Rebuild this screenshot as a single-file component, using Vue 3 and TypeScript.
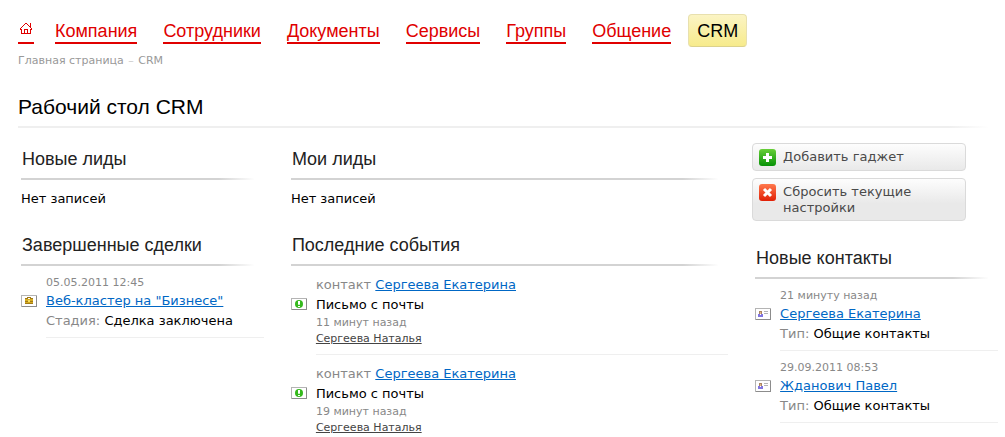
<script setup lang="ts">
interface Deal {
  date: string
  title: string
  stage: string
}

interface CrmEvent {
  contact: string
  subject: string
  ago: string
  author: string
}

interface Contact {
  date: string
  name: string
  type: string
}

const menu: string[] = ['Компания', 'Сотрудники', 'Документы', 'Сервисы', 'Группы', 'Общение']

const deals: Deal[] = [
  { date: '05.05.2011 12:45', title: 'Веб-кластер на "Бизнесе"', stage: 'Сделка заключена' },
]

const events: CrmEvent[] = [
  { contact: 'Сергеева Екатерина', subject: 'Письмо с почты', ago: '11 минут назад', author: 'Сергеева Наталья' },
  { contact: 'Сергеева Екатерина', subject: 'Письмо с почты', ago: '19 минут назад', author: 'Сергеева Наталья' },
]

const contacts: Contact[] = [
  { date: '21 минуту назад', name: 'Сергеева Екатерина', type: 'Общие контакты' },
  { date: '29.09.2011 08:53', name: 'Жданович Павел', type: 'Общие контакты' },
]
</script>

<template>
  <div class="page">
    <header>
      <nav class="menu">
        <a class="menu-link home" href="#" aria-label="Главная страница">
          <svg width="16" height="14" viewBox="0 0 16 14" fill="#e00000" shape-rendering="crispEdges" aria-hidden="true">
            <path d="M7 1h2v1h1v1h1v1h1v1h1v1h1v2h-1v4h-10v-4h-1v-2h1v-1h1v-1h1v-1h1v-1h1z M12 1h1v4h-1z" />
            <path fill="#fff" d="M7 2h2v1h1v1h1v1h1v1h1v1h-1v4h-2v-4h-4v4h-2v-4h-1v-1h1v-1h1v-1h1v-1h1z M7 8h2v3h-2z" />
          </svg>
        </a>
        <a v-for="item in menu" :key="item" class="menu-link" href="#">{{ item }}</a>
        <a class="menu-current" href="#" aria-current="page">CRM</a>
      </nav>
      <div class="crumbs"><a href="#">Главная страница</a> <i>–</i> <a href="#">CRM</a></div>
      <h1>Рабочий стол CRM</h1>
    </header>

    <main class="board">
      <div class="column">
        <section class="gadget">
          <h2>Новые лиды</h2>
          <p class="empty">Нет записей</p>
        </section>
        <section class="gadget">
          <h2>Завершенные сделки</h2>
          <ul>
            <li v-for="deal in deals" :key="deal.title">
              <svg class="icon" width="16" height="12" viewBox="0 0 16 12" shape-rendering="crispEdges" aria-hidden="true">
                <path fill="#b4b4b4" d="M0 0h16v12h-16z" />
                <path fill="#8c8c8c" d="M15 1h1v11h-15v-1h14z" />
                <path fill="#fff" d="M1 1h14v10h-14z" />
                <path fill="#a17a18" d="M6 2h4v1h2v6h-8v-6h2z" />
                <path fill="#fff" d="M7 3h2v1h-2z" />
                <path fill="#d6ac20" d="M4 4h8v2h-8z M4 7h8v1h-8z" />
                <path fill="#f5df62" d="M7 5h2v2h-2z" />
              </svg>
              <div class="body">
                <div class="date">{{ deal.date }}</div>
                <div class="line"><a class="link" href="#">{{ deal.title }}</a></div>
                <div class="line tall"><span class="label">Стадия:</span> {{ deal.stage }}</div>
              </div>
            </li>
          </ul>
        </section>
      </div>

      <div class="column">
        <section class="gadget">
          <h2>Мои лиды</h2>
          <p class="empty">Нет записей</p>
        </section>
        <section class="gadget">
          <h2>Последние события</h2>
          <ul>
            <li v-for="event in events" :key="event.ago">
              <svg class="icon low" width="16" height="12" viewBox="0 0 16 12" aria-hidden="true">
                <g shape-rendering="crispEdges">
                  <path fill="#b4b4b4" d="M0 0h16v12h-16z" />
                  <path fill="#8c8c8c" d="M15 1h1v11h-15v-1h14z" />
                  <path fill="#fff" d="M1 1h14v10h-14z" />
                </g>
                <circle cx="8" cy="6" r="4" fill="#35b91d" />
                <path fill="#fff" d="M7 3h2v3l-.5 1h-1l-.5-1z M7 8h2v1h-2z" />
              </svg>
              <div class="body roomy">
                <div class="line tall"><span class="label">контакт</span> <a class="link" href="#">{{ event.contact }}</a></div>
                <div class="line">{{ event.subject }}</div>
                <div class="small">{{ event.ago }}</div>
                <div class="small"><a class="author" href="#">{{ event.author }}</a></div>
              </div>
            </li>
          </ul>
        </section>
      </div>

      <div class="column">
        <div class="actions">
          <button type="button">
            <svg width="17" height="17" viewBox="0 0 17 17" aria-hidden="true">
              <defs>
                <linearGradient id="green" x2="0" y2="1">
                  <stop stop-color="#68cf38" />
                  <stop offset="1" stop-color="#079207" />
                </linearGradient>
              </defs>
              <rect width="17" height="17" rx="3" fill="url(#green)" />
              <path fill="#fff" d="M7 4h3v3h3v3h-3v3h-3v-3h-3v-3h3z" />
            </svg>
            <span>Добавить гаджет</span>
          </button>
          <button type="button">
            <svg width="17" height="17" viewBox="0 0 17 17" aria-hidden="true">
              <defs>
                <linearGradient id="red" x2="0" y2="1">
                  <stop stop-color="#ff784c" />
                  <stop offset="1" stop-color="#e12006" />
                </linearGradient>
              </defs>
              <rect width="17" height="17" rx="3" fill="url(#red)" />
              <path stroke="#fff" stroke-width="3" d="M5 5l7 7M12 5l-7 7" />
            </svg>
            <span>Сбросить текущие настройки</span>
          </button>
        </div>
        <section class="gadget first">
          <h2>Новые контакты</h2>
          <ul>
            <li v-for="contact in contacts" :key="contact.name">
              <svg class="icon" width="16" height="12" viewBox="0 0 16 12" shape-rendering="crispEdges" aria-hidden="true">
                <path fill="#b4b4b4" d="M0 0h16v12h-16z" />
                <path fill="#8c8c8c" d="M15 1h1v11h-15v-1h14z" />
                <path fill="#fff" d="M1 1h14v10h-14z" />
                <path fill="#a98562" d="M4 3h3v3h-3z" />
                <path fill="#e2b58b" d="M5 4h1v2h-1z" />
                <path fill="#8175e0" d="M3 6h2v1h1v-1h2v3h-5z" />
                <path fill="#b5b5b5" d="M9 3h4v1h-4z M9 5h4v1h-4z" />
              </svg>
              <div class="body">
                <div class="date">{{ contact.date }}</div>
                <div class="line"><a class="link" href="#">{{ contact.name }}</a></div>
                <div class="line tall"><span class="label">Тип:</span> {{ contact.type }}</div>
              </div>
            </li>
          </ul>
        </section>
      </div>
    </main>
  </div>
</template>

<style>
body {
  margin: 0;
  background: #fff;
}
</style>

<style scoped>
.page {
  padding: 14px 7px 0 18px;
  font: 13px/18px Verdana, "DejaVu Sans", sans-serif;
  color: #000;
}

.menu {
  display: flex;
  align-items: flex-start;
  gap: 26px;
  font: 18px/22px Arial, "Liberation Sans", sans-serif;
}

.menu-link {
  margin-top: 6px;
  border-bottom: 2px solid #e00000;
  color: #e00000;
  text-decoration: none;
}

.home {
  display: block;
  height: 22px;
  margin-right: -5px;
}

.home svg {
  display: block;
  margin-top: 2px;
}

.menu-current {
  box-sizing: border-box;
  height: 33px;
  margin-left: -9px;
  padding: 5px 8px;
  border: 1px solid #e8e0ae;
  border-bottom-color: #dcd28c;
  border-radius: 4px;
  background: linear-gradient(#fbf4c4, #f7eb8c);
  color: #000;
  text-decoration: none;
}

.crumbs {
  margin-top: 6px;
  font-size: 11px;
  line-height: 16px;
  color: #ccc;
}

.crumbs a {
  color: #999;
  text-decoration: none;
}

.crumbs i {
  margin: 0 1px;
  font-style: normal;
}

h1 {
  margin: 26px 10px 0 0;
  padding-bottom: 7px;
  border-bottom: 2px solid;
  border-image: linear-gradient(90deg, #efefef calc(100% - 40px), #fff) 1;
  font: 21px/24px Arial, "Liberation Sans", sans-serif;
}

.board {
  display: grid;
  grid-template-columns: 5fr 9fr 5fr;
  gap: 27px;
  padding: 15px 0 0 3px;
}

.column {
  min-width: 0;
}

.gadget + .gadget {
  margin-top: 21px;
}

h2 {
  margin: 0 10px 0 0;
  padding: 5px 1px 8px;
  border-bottom: 2px solid;
  border-image: linear-gradient(90deg, #d3d3d3 calc(100% - 36px), #fff) 1;
  font: 18px/22px Arial, "Liberation Sans", sans-serif;
  color: #222;
}

.empty {
  margin: 0;
  padding-top: 10px;
  line-height: 18px;
}

ul {
  margin: 0;
  padding: 0;
  list-style: none;
}

li {
  display: flex;
  gap: 9px;
}

.icon {
  flex: none;
  margin-top: 29px;
}

.icon.low {
  margin-top: 32px;
}

.body {
  flex: 1;
  padding: 8px 0 5px;
  border-bottom: 1px solid #efefef;
}

.body.roomy {
  padding-bottom: 7px;
}

.date {
  font-size: 11px;
  color: #888;
}

.tall {
  line-height: 22px;
}

.small {
  font-size: 11px;
  line-height: 16px;
  color: #888;
}

.line + .small {
  padding-top: 1px;
}

.label {
  color: #888;
}

.link {
  color: #0067c5;
}

.author {
  color: #444;
}

.actions {
  display: flex;
  flex-direction: column;
  gap: 7px;
  max-width: 214px;
  margin: 0 0 21px -3px;
}

button {
  display: flex;
  align-items: flex-start;
  gap: 7px;
  padding: 5px 6px 4px;
  border: 1px solid #dadada;
  border-radius: 4px;
  background: linear-gradient(#fdfdfd, #e9e9e9 60%);
  font: 13px/16px Verdana, "DejaVu Sans", sans-serif;
  color: #4a4a4a;
  text-align: left;
}

button:first-child {
  background: linear-gradient(#fdfdfd, #e9e9e9);
}

button svg {
  flex: none;
}
</style>
